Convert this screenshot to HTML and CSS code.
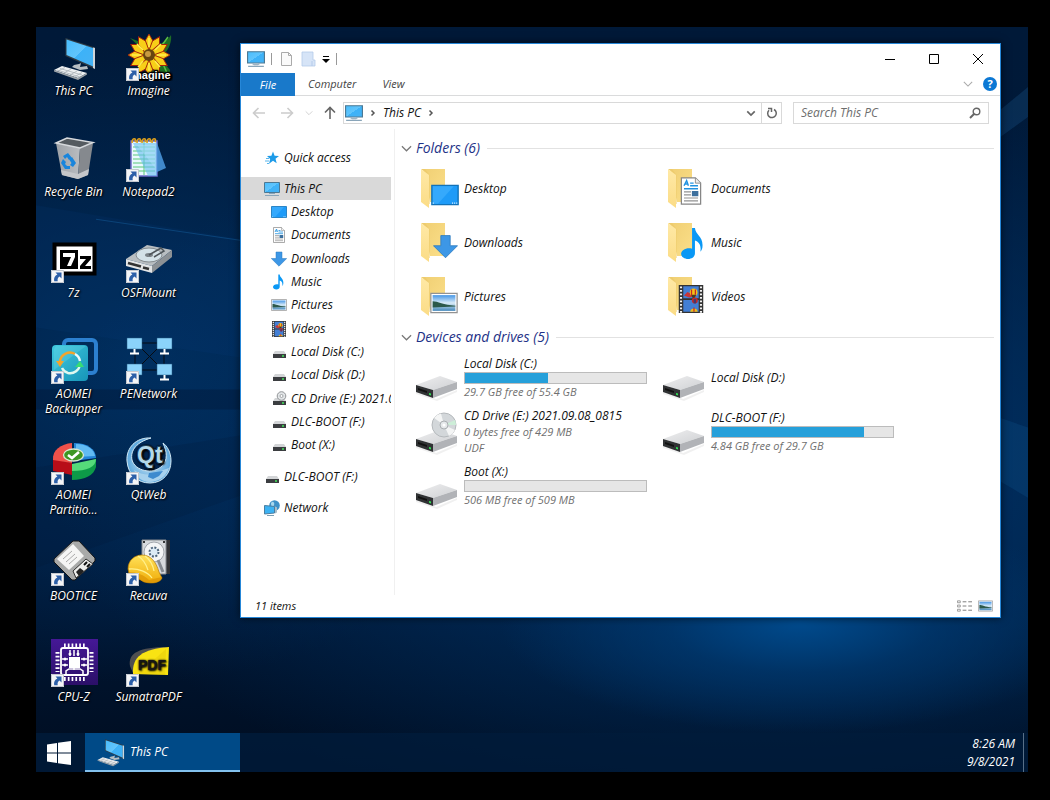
FILE: index.html
```html
<!DOCTYPE html>
<html lang="en">
<head>
  <meta charset="UTF-8">
  <meta name="viewport" content="width=device-width, initial-scale=1.0">
  <title>This PC</title>
  <link rel="stylesheet" href="styles.css">
</head>
<body>
  <!-- shared icons -->
  <svg class="sprite" aria-hidden="true">
    <defs>
      <linearGradient id="blue" x1="0" y1="0" x2="1" y2="1"><stop offset="0" stop-color="#48bdfd"/><stop offset=".5" stop-color="#62c5fc"/><stop offset=".5" stop-color="#3db2f8"/><stop offset="1" stop-color="#45b2f4"/></linearGradient>
      <linearGradient id="sky" x1="0" y1="0" x2="0" y2="1"><stop offset="0" stop-color="#4696e6"/><stop offset=".5" stop-color="#d9ebf7"/><stop offset="1" stop-color="#4387bb"/></linearGradient>
      <linearGradient id="gold" x1="0" y1="0" x2="1" y2="1"><stop offset="0" stop-color="#f0cf73"/><stop offset="1" stop-color="#fbdf8a"/></linearGradient>
      <linearGradient id="flap" x1="0" y1="0" x2="0" y2="1"><stop offset="0" stop-color="#ffe9a6"/><stop offset="1" stop-color="#fbdc86"/></linearGradient>
      <linearGradient id="metal" x1="0" y1="0" x2="1" y2="1"><stop offset="0" stop-color="#eeeeef"/><stop offset="1" stop-color="#cfd1d4"/></linearGradient>
      <linearGradient id="teal" x1="0" y1="0" x2="1" y2="1"><stop offset="0" stop-color="#3fc9df"/><stop offset="1" stop-color="#1795b8"/></linearGradient>
      <radialGradient id="globe"><stop offset="0" stop-color="#d6ecf8"/><stop offset="1" stop-color="#5aa6dc"/></radialGradient>
      <linearGradient id="helmet" x1="0" y1="0" x2="0" y2="1"><stop offset="0" stop-color="#ffe25a"/><stop offset="1" stop-color="#f0ac08"/></linearGradient>
      <linearGradient id="purple" x1="0" y1="0" x2="0" y2="1"><stop offset="0" stop-color="#451896"/><stop offset="1" stop-color="#2b1068"/></linearGradient>
      <linearGradient id="bin" x1="0" y1="0" x2="1" y2="0"><stop offset="0" stop-color="#9da1a6"/><stop offset="1" stop-color="#b9bcc0"/></linearGradient>
    </defs>
    <symbol id="shortcut" viewBox="0 0 13 13">
      <path d="M0 0h13v13H0z" fill="#f4f5f7"/><path d="M.5.5h12v12H.5z" fill="none" stroke="#c4c8cf"/>
      <path d="M4.500 2.500h6v6L8.600 6.600C7 7.500 6.300 9 6.700 11.200H3.200C2.500 8 4 5.700 6.400 4.500z" fill="#2c5fa8"/>
    </symbol>
    <symbol id="pc" viewBox="0 0 16 16">
      <path d="M.5 1.500h15v10H.5z" fill="url(#blue)" stroke="#4c7893"/><path d="M6 12h4v2H6z" fill="#d4dde3"/><path d="M1 14.500h14M5 12.500h6" stroke="#89a5b9"/>
    </symbol>
    <symbol id="pc-big" viewBox="0 0 48 48">
      <path d="M31 30l-1 4 7-1 1 3-8 1-8-3 2-2 5-1z" fill="#b6bdc1"/>
      <path d="M15.500 5l29.500 9.500V36L15.500 23z" fill="#303c45"/><path d="M16.500 6.500L43 15v18.500L16.500 22z" fill="url(#blue)"/><path d="M43 14.500l2 .5v21l-2-1z" fill="#cfd5d9"/>
      <path d="M4 37l8-4 25 7-9 5z" fill="#eef0f1"/><path d="M4 37l24 8 9-5v1.500L28 47 4 38.500z" fill="#9aa1a6"/>
      <path d="M7 37l23 7M10 35.500l22 6.500M15 34.500l-6 3M21 36l-7 4M27 38l-7 4M32 39.500l-7 4" stroke="#aab1b6" stroke-width=".8"/>
    </symbol>
    <symbol id="desktop" viewBox="0 0 16 16">
      <path d="M.5 2.500h15v11H.5z" fill="#1e9bf8" stroke="#1272b8" stroke-width=".8"/><path d="M1 3h12L4 13H1z" fill="#45b3ff" opacity=".6"/><path d="M1 12.700h.6M12 12.700h.6M13.200 12.700h.6M14.400 12.700h.6" stroke="#d9f0ff" stroke-width=".7"/>
    </symbol>
    <symbol id="doc" viewBox="0 0 16 16">
      <path d="M2.500.5h8l3 3v12h-11z" fill="#fff" stroke="#868686" stroke-width=".7"/><path d="M10.500.5v3h3" fill="#eee" stroke="#868686" stroke-width=".5"/>
      <path d="M4 5l1.500-3L6.500 5M4.500 4h1.800M7.500 3.500h2M7.500 5h4.500M4 6.700h8" stroke="#2192e0" stroke-width=".8" fill="none"/><path d="M4 8.500h4M4 10.200h4M4 12h8M4 13.700h8" stroke="#929292" stroke-width=".7"/><path d="M8.500 8h3.700v3H8.500z" fill="#3c6f9d"/>
    </symbol>
    <symbol id="download" viewBox="0 0 16 16"><path d="M5 1h6v6.500h4.700L8 15.200.3 7.500H5z" fill="#3d97e6" stroke="#2a78bd" stroke-width=".5"/></symbol>
    <symbol id="music" viewBox="0 0 16 16"><path d="M7.300.5h1.400c.3 3.500 4.300 4 3.600 9.500-.2 1-.6 1.500-1 2 .5-2.500-.2-4.700-2.600-5.500v6.200c0 1.700-1.500 2.800-3.300 2.800S2 14.500 2 13c0-1.700 2.500-3.200 5.300-2.500z" fill="#0a98f5"/></symbol>
    <symbol id="picture" viewBox="0 0 16 16">
      <path d="M.5 2.500h15v11H.5z" fill="#fff" stroke="#929292" stroke-width=".7"/><path d="M1.500 3.500h13v9h-13z" fill="url(#sky)"/><path d="M1.500 7c3 0 6 2 13 2.600V10l-13 .6z" fill="#2c594b"/>
    </symbol>
    <symbol id="video" viewBox="0 0 16 16">
      <path d="M1 0h14v16H1z" fill="#333"/><path d="M3.600 .7h8.800v6.800H3.600zM3.600 8.500h8.800v6.800H3.600z" fill="#437fd5"/>
      <path d="M4 6l2-2 2 1 1 1.500-2 .7z" fill="#c93538"/><circle cx="9.500" cy="4.200" r="2.200" fill="#f2c319"/><path d="M8 5.500h3l-1 2H9z" fill="#4a3b20"/><circle cx="10.200" cy="8.800" r="1.700" fill="#c32929"/><path d="M9.500 8h1.400v2.500H9.500z" fill="#433a70"/><path d="M7.500 15.300a2.300 2.600 0 0 1 4.400 0z" fill="#efbc16"/><path d="M8.300 2.600v3.200M10.500 2.500v3M9.700 12.800v2.500" stroke="#c62626" stroke-width=".7"/>
      <path d="M2.300.8v15M13.700.8v15" stroke="#f2f2f2" stroke-width="1.200" stroke-dasharray="1.100 .9"/>
    </symbol>
    <symbol id="drive" viewBox="0 0 16 16"><path d="M4 7h9l2 3H2z" fill="#d3d5d7"/><path d="M2 10h13v4H2z" fill="#3b3d40"/><path d="M11 12h2" stroke="#42e65a" stroke-width="1.500"/></symbol>
    <symbol id="cd" viewBox="0 0 16 16"><use href="#drive"/><circle cx="10.500" cy="5" r="4.300" fill="#e2e5e7" stroke="#929598"/><circle cx="10.500" cy="5" r="1.500" fill="#fff" stroke="#929598" stroke-width=".8"/></symbol>
    <symbol id="network" viewBox="0 0 16 16">
      <circle cx="10.500" cy="5.500" r="5.300" fill="#3e91c8"/><path d="M7 3c2-3 4 0 3 2s2 1 3 3c-3 3-6 0-6-5z" fill="#a8d8ee"/>
      <path d="M.5 5.500l10 1v6.500l-10 1z" fill="#3cb2f3" stroke="#4b7ea0"/><path d="M11 6.500l2 1v5l-2 1z" fill="#a9bdc9"/><path d="M3 15.500h7" stroke="#7c9eb3"/>
    </symbol>
    <symbol id="star" viewBox="0 0 16 16"><path d="M9 1.500l1.600 4.300 4.400.2-3.500 2.700 1.200 4.500L9 10.700 5 13.700l1.200-4.600L3 6l4.400-.2z" fill="#1e9be8"/><path d="M2 8.500h3M1 11h4M3 13.500h2" stroke="#56b5ec"/></symbol>
    <symbol id="folder" viewBox="0 0 48 48">
      <path d="M7 4h22v33H14z" fill="url(#gold)"/><path d="M5 4h4l4.500 6v29H13V10z" fill="#edcb6d"/><path d="M5 4l8 6v33l-8-6z" fill="url(#flap)"/>
    </symbol>
    <symbol id="drive-big" viewBox="0 0 48 48">
      <path d="M0 36l20 9 21-9v2L21 47 0 40z" fill="#000" opacity=".06"/>
      <path d="M0 31l24-9 17 6-24 8z" fill="url(#metal)"/><path d="M17 36l24-8v7l-24 9z" fill="#b1b3b7"/><path d="M0 31l17 5v8L0 38z" fill="#303234"/><path d="M2 34l9 3v2l-9-3z" fill="#111"/><path d="M13 39l2 .6v1.800l-2-.6z" fill="#30e154"/>
    </symbol>
    <symbol id="cd-big" viewBox="0 0 48 48">
      <use href="#drive-big"/><circle cx="28" cy="17" r="12" fill="#d3d7da" stroke="#b5b9bc"/><path d="M28 17L18 10a12 12 0 0 1 7-4.500zM28 17l11 5a12 12 0 0 1-6 6z" fill="#f4f5f5"/><path d="M28 17l11-5a12 12 0 0 1 1 5z" fill="#cdeed8"/><circle cx="28" cy="17" r="4" fill="#e5e8ea" stroke="#abafb2"/><circle cx="28" cy="17" r="1.500" fill="#fff"/>
    </symbol>
    <symbol id="chevron-down" viewBox="0 0 12 12"><path d="M1 3.500l5 5 5-5" fill="none" stroke="currentColor" stroke-width="1.300"/></symbol>
    <symbol id="chevron-right" viewBox="0 0 12 12"><path d="M4.500 3.500L7 6 4.500 8.500" fill="none" stroke="currentColor" stroke-width="1.500"/></symbol>
    <symbol id="arrow" viewBox="0 0 14 14"><path d="M13 7H2M6.500 2L1.500 7l5 5" fill="none" stroke="currentColor" stroke-width="1.600"/></symbol>
  </svg>

  <main class="desktop">
    <svg class="beams" viewBox="0 0 992 744" preserveAspectRatio="none" aria-hidden="true">
      <path d="M0 178L204 212V330L0 300z" fill="#06407d" opacity=".14"/>
      <path d="M60 192l144 21" stroke="#1c73b8" opacity=".35"/>
      <path d="M0 362h204v20H0z" fill="#00112b" opacity=".3"/>
      <path d="M0 440l204-32v60L0 540z" fill="#00122e" opacity=".15"/>
      <path d="M700 300L992 90V60z" fill="#2a79b8" opacity=".2"/>
      <path d="M700 300l292 100v70z" fill="#1d76bb" opacity=".15"/>
    </svg>

    <section class="shortcuts">
      <a class="shortcut" href="#"><svg><use href="#pc-big"/></svg><span>This PC</span></a>
      <a class="shortcut" href="#">
        <svg viewBox="0 0 48 48">
          <path d="M5 5l13 5-2 5zM46 2c-3 6-11 8-14 12l8 6c4-4 7-12 6-18zM36 26l9 11v8H20l3-11z" fill="#1d6d25"/><path d="M43 4l-8 11M38 31l4 9" stroke="#5bbf42" stroke-width="1.500"/>
          <g stroke="#a3200b" stroke-width=".9">
            <g id="petals" fill="#f8cf18"><path d="M24 1l4 7-2 12h-4L20 8zM24 43l4-7-2-12h-4l-2 12zM3 22l7-4 12 2v4l-12 2zM45 22l-7-4-12 2v4l12 2z"/></g>
            <use href="#petals" transform="rotate(30 24 22)"/><use href="#petals" transform="rotate(60 24 22)"/>
          </g>
          <path d="M24 14V5M18 17l-6-6M30 17l6-6M16 22H7M32 22h9M18 28l-5 6M30 28l5 6M24 30v8" stroke="#fff04e" stroke-width="1.500"/>
          <circle cx="24" cy="22" r="6" fill="#69450f"/><circle cx="23" cy="21" r="3" fill="#c99a40"/>
          <text class="imagine-text" x="7" y="46">magine</text>
          <use href="#shortcut" x="1" y="35" width="13" height="13"/>
        </svg>
        <span>Imagine</span>
      </a>
      <a class="shortcut" href="#">
        <svg viewBox="0 0 48 48">
          <path d="M6 9l24 5-2 31-16-4z" fill="url(#bin)"/><path d="M30 14l13-5-5 32-10 4z" fill="#85898e"/>
          <path d="M6 9l11-5 26 4.500L30 14z" fill="#555b60" stroke="#d7dadd" stroke-width="1.500"/><path d="M11 36l17 4 11-5-1 6-10 4-16-4z" fill="#c5c7ca"/>
          <path d="M13 22l5-3 4 5-3 2-2-3-2 2zM22 23l4 6-3 4-3-2 1.500-2-2-3zM20 35h-5l-4-6 2-4 3 3-1 2 2 2h3z" fill="#1985dc"/>
        </svg>
        <span>Recycle Bin</span>
      </a>
      <a class="shortcut" href="#">
        <svg viewBox="0 0 48 48">
          <path d="M6 7h26v35H6z" fill="#eaf8ff" stroke="#6c6ac8" stroke-width="1.500"/><path d="M8 13h22M8 17h22M8 21h22M8 25h22M8 29h22M8 33h22M8 37h22M19 8v33" stroke="#5ac878"/>
          <path d="M8 9h24v33h-9z" fill="#64bdf0" opacity=".6"/><path d="M32 9l9 25-9 4z" fill="#4793d8" opacity=".9"/><path d="M12 11h18v23z" fill="#b6e6fc" opacity=".4"/>
          <path d="M7 9c0-6 5-5 3-1M12 9c0-6 5-5 3-1M17 9c0-6 5-5 3-1M22 9c0-6 5-5 3-1M27 9c0-6 5-5 3-1" fill="none" stroke="#d99e1d" stroke-width="1.700"/>
          <use href="#shortcut" x="1" y="35" width="13" height="13"/>
        </svg>
        <span>Notepad2</span>
      </a>
      <a class="shortcut" href="#">
        <svg viewBox="0 0 48 48">
          <path d="M4.500 9.500h40v29h-40z" fill="#fff" stroke="#000" stroke-width="4"/><path d="M10 15h18v19H10z"/>
          <path d="M13 18h12v4l-4 9h-4l4-9h-8z" fill="#fff"/><path d="M30 21h11v3l-6 7h6v3H30v-3l6-7h-6z"/>
          <use href="#shortcut" x="1" y="35" width="13" height="13"/>
        </svg>
        <span>7z</span>
      </a>
      <a class="shortcut" href="#">
        <svg viewBox="0 0 48 48">
          <path d="M1 24l21-14 25 5-20 16z" fill="#b9bec1"/><path d="M1 24l26 7v7L1 31z" fill="#e3e5e6"/><path d="M27 31l20-16v7L27 38z" fill="#8c9195"/>
          <ellipse cx="24" cy="20" rx="13" ry="7" fill="#d4e2e8" stroke="#858b8f"/><ellipse cx="24" cy="20" rx="4" ry="2" fill="#7b8388"/><path d="M24 20l12-7 3 3-10 6" fill="none" stroke="#4e555a" stroke-width="1.500"/><path d="M3 28l13 3.500M18 32.500l6 1.500" stroke="#333" stroke-width="2.500"/>
          <use href="#shortcut" x="1" y="35" width="13" height="13"/>
        </svg>
        <span>OSFMount</span>
      </a>
      <a class="shortcut" href="#">
        <svg viewBox="0 0 48 48">
          <rect x="14" y="4" width="32" height="33" rx="4" fill="none" stroke="#2c80d0" stroke-width="4"/><rect x="2" y="9" width="36" height="36" rx="4" fill="url(#teal)"/><path d="M6 10h30L4 34V13z" fill="#7fe0ef" opacity=".25"/>
          <path d="M10 25a10 10 0 0 1 15-7" fill="none" stroke="#f3a42c" stroke-width="2.500"/><path d="M25 18a10 10 0 0 1 5 7" fill="none" stroke="#eefafa" stroke-width="2.500"/><path d="M30 28a10 10 0 0 1-12 9q-4-1-6-5" fill="none" stroke="#dff8ef" stroke-width="2.500"/><path d="M6 25h8l-4 6z" fill="#f3a42c"/><path d="M25 31l5-6 4 6z" fill="#38dc74"/>
          <use href="#shortcut" x="1" y="35" width="13" height="13"/>
        </svg>
        <span>AOMEI Backupper</span>
      </a>
      <a class="shortcut" href="#">
        <svg viewBox="0 0 48 48">
          <path d="M17 7h15M10 18v10M39 18v10M17 13l15 15M32 13L17 28M17 34h15" stroke="#070b12"/>
          <g id="screens"><path d="M2 2h15v11H2zM32 2h15v11H32z" fill="#8bd3fb" stroke="#245b82" stroke-width=".5"/><path d="M9.500 13v4M5 17.500h9M39.500 13v4M35 17.500h9" stroke="#fff" stroke-width="2"/></g>
          <use href="#screens" y="26"/>
          <use href="#shortcut" x="1" y="35" width="13" height="13"/>
        </svg>
        <span>PENetwork</span>
      </a>
      <a class="shortcut" href="#">
        <svg viewBox="0 0 48 48">
          <path d="M3 22l19 4v12L3 34z" fill="#b80d18"/><path d="M22 26L3 23C2 13 11 7 22 6z" fill="#ef514a"/>
          <path d="M24 21V6c13 0 22 6 22 15l-22 3z" fill="#2386da"/><path d="M26 20V7c12 0 18 6 19 12z" fill="#62bbf3"/>
          <path d="M22 29l24-7v8c-2 8-11 13-24 13z" fill="#0d9a48"/><path d="M22 27l24-5c0 8-9 12-24 12z" fill="#55da7a"/>
          <ellipse cx="23.500" cy="18" rx="10" ry="6" fill="#3d9722" stroke="#d9e8d2" stroke-width="1.300"/><path d="M18 18l4 3 7-6" fill="none" stroke="#fff" stroke-width="2.600"/>
          <use href="#shortcut" x="1" y="35" width="13" height="13"/>
        </svg>
        <span>AOMEI Partitio...</span>
      </a>
      <a class="shortcut" href="#">
        <svg viewBox="0 0 48 48">
          <path d="M26 1C11 0 1 11 2 24c1 14 11 22 23 22 13 0 21-10 21-22 0-9-4-15-8-18 4 9 5 17-1 23-9 9-27 5-30-6C5 13 12 5 26 1z" fill="url(#globe)" stroke="#d3e9f5"/>
          <path d="M9 33c9 6 20 6 29 0l6-2c-3 9-11 14-20 14-7 0-12-5-15-12z" fill="#a7d1ed"/><path d="M24 36l14-2-4 5-6 3-5-2z" fill="#3d8ace"/>
          <text class="qt-text" x="12" y="26">Qt</text>
          <use href="#shortcut" x="1" y="35" width="13" height="13"/>
        </svg>
        <span>QtWeb</span>
      </a>
      <a class="shortcut" href="#">
        <svg viewBox="0 0 48 48">
          <path d="M4 21L23 3h6l16 17v3L25 42h-3L4 24z" fill="#a9aaa9" stroke="#151515"/><path d="M7 21L23 6l11 12-15 14z" fill="#f5f5f4"/><path d="M13 21l9-8M16 24l9-8M19 26l8-7" stroke="#aaa"/>
          <path d="M23 33l13-12 7 5-17 14z" fill="#ededeb" stroke="#303030"/><path d="M26 34l4-4 4 3-5 5z" fill="#222"/><path d="M34 27l3-3M37 29l3-3" stroke="#111" stroke-width="2"/>
          <use href="#shortcut" x="1" y="35" width="13" height="13"/>
        </svg>
        <span>BOOTICE</span>
      </a>
      <a class="shortcut" href="#">
        <svg viewBox="0 0 48 48">
          <path d="M39 2h6v34h-6z" fill="#303236"/><path d="M17 2h24v34H17z" fill="#d7dadd" stroke="#85898e"/><circle cx="29" cy="14" r="10" fill="#f4f5f6" stroke="#a2a6ac"/><circle cx="29" cy="14" r="4.500" fill="#dceaf5" stroke="#4c637a" stroke-width="2" stroke-dasharray="2 1.500"/><path d="M38 34l-5-12" stroke="#858a91" stroke-width="3"/><circle cx="19" cy="4" r="1"/><circle cx="39" cy="4" r="1"/>
          <path d="M3 31c0-9 7-14 14-14 9 0 14 7 17 17l3 6c-2 5-10 6-18 4L4 35z" fill="url(#helmet)" stroke="#b97b00" stroke-width=".7"/><path d="M4 31c9-1 19 3 23 9M13 18c5 3 8 8 10 14M20 18c4 3 8 9 9 15" fill="none" stroke="#fff08b" stroke-width="1.300"/><path d="M3 34c9 0 16 3 21 8l13-3c-2 7-13 7-20 4z" fill="#dc9606" opacity=".75"/>
          <use href="#shortcut" x="1" y="35" width="13" height="13"/>
        </svg>
        <span>Recuva</span>
      </a>
      <a class="shortcut" href="#">
        <svg viewBox="0 0 48 48">
          <path d="M1 0h47v46H1z" fill="url(#purple)"/>
          <g fill="none" stroke="#fff"><rect x="11" y="9" width="27" height="27" rx="2" stroke-width="1.800"/><path d="M14 6.500h21M14 40h21M7.500 13v20M41.500 13v20" stroke-width="4" stroke-dasharray="1.700 2.100"/><path d="M20 17v-6M24 17v-6M28 17v-6M18 20h-6M18 26h-6M31 20h6M31 26h6M16 36v-4l3-2h11l3 2v4M24 28v3" stroke-width="1.500"/></g>
          <path d="M19 18h11v11H19z" fill="#fff"/><g fill="#fff"><circle cx="20" cy="15" r="1.500"/><circle cx="28" cy="15" r="1.500"/><circle cx="15" cy="20" r="1.500"/><circle cx="15" cy="26" r="1.500"/><circle cx="34" cy="20" r="1.500"/><circle cx="34" cy="26" r="1.500"/></g>
          <use href="#shortcut" x="1" y="35" width="13" height="13"/>
        </svg>
        <span>CPU-Z</span>
      </a>
      <a class="shortcut" href="#">
        <svg viewBox="0 0 48 48">
          <path d="M5 27C3 14 14 8 43 8L20 13 8 34z" fill="#4e4f50"/><path d="M8 35C7 18 17 10 44 8l-1 28z" fill="#f9e313"/><path d="M13 35L41 10l-1 26z" fill="#d5b300" opacity=".25"/>
          <text class="pdf-text" x="13" y="31">PDF</text>
          <use href="#shortcut" x="1" y="35" width="13" height="13"/>
        </svg>
        <span>SumatraPDF</span>
      </a>
    </section>

    <section class="window" aria-label="This PC">
      <header class="titlebar">
        <svg class="icon-18"><use href="#pc"/></svg>
        <i class="sep"></i>
        <button class="quick" aria-label="Properties"><svg class="icon-16" viewBox="0 0 16 16"><path d="M3.500 1.500h7l3 3v10h-10z" fill="#fafafa" stroke="#aaa"/><path d="M10.500 1.500v3h3" fill="none" stroke="#aaa"/></svg></button>
        <button class="quick" aria-label="New folder"><svg class="icon-16" viewBox="0 0 16 16"><path d="M2 1h11v8h2v6H2z" fill="#d6e4f7" stroke="#b4caea" stroke-width=".8"/><path d="M12 15v-5" stroke="#b4caea"/></svg></button>
        <button class="quick small" aria-label="Customize toolbar"><svg viewBox="0 0 8 8"><path d="M1 1h6v1H1zM0 4h8L4 8z"/></svg></button>
        <i class="sep"></i>
        <div class="controls">
          <button aria-label="Minimize"><svg viewBox="0 0 12 12"><path d="M1 6.500h10"/></svg></button>
          <button aria-label="Maximize"><svg viewBox="0 0 12 12"><path d="M1.500 1.500h9v9h-9z"/></svg></button>
          <button aria-label="Close"><svg viewBox="0 0 12 12"><path d="M1 1l10 10M11 1L1 11"/></svg></button>
        </div>
      </header>

      <nav class="ribbon">
        <button class="file">File</button>
        <button>Computer</button>
        <button>View</button>
        <div class="ribbon-end">
          <button aria-label="Expand ribbon"><svg class="icon-10"><use href="#chevron-down"/></svg></button>
          <button class="help" aria-label="Help">?</button>
        </div>
      </nav>

      <div class="address-row">
        <div class="history">
          <button class="off" aria-label="Back"><svg><use href="#arrow"/></svg></button>
          <button class="off forward" aria-label="Forward"><svg><use href="#arrow"/></svg></button>
          <button class="off recent" aria-label="Recent locations"><svg><use href="#chevron-down"/></svg></button>
          <button class="up" aria-label="Up"><svg><use href="#arrow"/></svg></button>
        </div>
        <div class="address">
          <svg class="icon-18"><use href="#pc"/></svg>
          <svg class="crumb"><use href="#chevron-right"/></svg>
          <button>This PC</button>
          <svg class="crumb"><use href="#chevron-right"/></svg>
          <button class="drop" aria-label="Previous locations"><svg class="icon-10" viewBox="0 0 12 12"><path d="M1.500 4L6 8.500 10.500 4" fill="none" stroke="#666" stroke-width="2"/></svg></button>
          <button class="refresh" aria-label="Refresh"><svg viewBox="0 0 12 12"><path d="M8 2.500A4.300 4.300 0 1 1 3 3.200M2 1.500h3.500V5" fill="none" stroke="#666" stroke-width="1.500"/></svg></button>
        </div>
        <label class="search">
          <input type="text" placeholder="Search This PC" aria-label="Search This PC">
          <svg viewBox="0 0 12 12"><circle cx="7.500" cy="4.500" r="3.300" fill="none" stroke="#666" stroke-width="1.400"/><path d="M5 7L1 11" stroke="#666" stroke-width="2"/></svg>
        </label>
      </div>

      <div class="body">
        <nav class="tree">
          <ul>
            <li><a href="#"><svg><use href="#star"/></svg>Quick access</a></li>
          </ul>
          <ul class="pc-tree">
            <li class="selected"><a href="#"><svg><use href="#pc"/></svg>This PC</a></li>
            <li class="child"><a href="#"><svg><use href="#desktop"/></svg>Desktop</a></li>
            <li class="child"><a href="#"><svg><use href="#doc"/></svg>Documents</a></li>
            <li class="child"><a href="#"><svg><use href="#download"/></svg>Downloads</a></li>
            <li class="child"><a href="#"><svg><use href="#music"/></svg>Music</a></li>
            <li class="child"><a href="#"><svg><use href="#picture"/></svg>Pictures</a></li>
            <li class="child"><a href="#"><svg><use href="#video"/></svg>Videos</a></li>
            <li class="child"><a href="#"><svg><use href="#drive"/></svg>Local Disk (C:)</a></li>
            <li class="child"><a href="#"><svg><use href="#drive"/></svg>Local Disk (D:)</a></li>
            <li class="child"><a href="#"><svg><use href="#cd"/></svg>CD Drive (E:) 2021.09.08_0815</a></li>
            <li class="child"><a href="#"><svg><use href="#drive"/></svg>DLC-BOOT (F:)</a></li>
            <li class="child"><a href="#"><svg><use href="#drive"/></svg>Boot (X:)</a></li>
          </ul>
          <ul>
            <li><a href="#"><svg><use href="#drive"/></svg>DLC-BOOT (F:)</a></li>
          </ul>
          <ul>
            <li><a href="#"><svg><use href="#network"/></svg>Network</a></li>
          </ul>
        </nav>

        <div class="content">
          <h2><svg><use href="#chevron-down"/></svg>Folders (6)</h2>
          <div class="tiles">
            <a class="tile" href="#"><svg viewBox="0 0 48 48"><use href="#folder"/><use href="#desktop" x="15" y="16" width="28" height="28"/></svg><span>Desktop</span></a>
            <a class="tile" href="#"><svg viewBox="0 0 48 48"><use href="#folder"/><use href="#doc" x="14" y="12" width="28" height="28"/></svg><span>Documents</span></a>
            <a class="tile" href="#"><svg viewBox="0 0 48 48"><use href="#folder"/><use href="#download" x="17" y="15" width="25" height="25"/></svg><span>Downloads</span></a>
            <a class="tile" href="#"><svg viewBox="0 0 48 48"><use href="#folder"/><use href="#music" x="14" y="8" width="33" height="33"/></svg><span>Music</span></a>
            <a class="tile" href="#"><svg viewBox="0 0 48 48"><use href="#folder"/><use href="#picture" x="14" y="16" width="28" height="28"/></svg><span>Pictures</span></a>
            <a class="tile" href="#"><svg viewBox="0 0 48 48"><use href="#folder"/><use href="#video" x="14" y="12" width="28" height="28"/></svg><span>Videos</span></a>
          </div>
          <h2><svg><use href="#chevron-down"/></svg>Devices and drives (5)</h2>
          <div class="tiles">
            <a class="tile" href="#"><svg><use href="#drive-big"/></svg><span>Local Disk (C:)<i class="bar"><b style="width: 46%"></b></i><small>29.7 GB free of 55.4 GB</small></span></a>
            <a class="tile" href="#"><svg><use href="#drive-big"/></svg><span>Local Disk (D:)</span></a>
            <a class="tile" href="#"><svg><use href="#cd-big"/></svg><span>CD Drive (E:) 2021.09.08_0815<small>0 bytes free of 429 MB</small><small>UDF</small></span></a>
            <a class="tile" href="#"><svg><use href="#drive-big"/></svg><span>DLC-BOOT (F:)<i class="bar"><b style="width: 84%"></b></i><small>4.84 GB free of 29.7 GB</small></span></a>
            <a class="tile" href="#"><svg><use href="#drive-big"/></svg><span>Boot (X:)<i class="bar"><b style="width: 0%"></b></i><small>506 MB free of 509 MB</small></span></a>
          </div>
        </div>
      </div>

      <footer class="status">
        <span>11 items</span>
        <div class="views">
          <button aria-label="Details view"><svg viewBox="0 0 16 14"><path d="M.5 1.500h3v2h-3zM.5 6h3v2h-3zM.5 10.500h3v2h-3z" fill="#fff" stroke="#999"/><path d="M6 2.500h4M12 2.500h4M6 7h4M12 7h4M6 11.500h4M12 11.500h4" stroke="#777"/></svg></button>
          <button aria-label="Large icons view"><svg viewBox="0 1 16 14"><use href="#picture" width="16" height="16"/></svg></button>
        </div>
      </footer>
    </section>

    <footer class="taskbar">
      <button class="start" aria-label="Start"><svg viewBox="0 0 24 24"><path d="M0 3.500L10 2v9.500H0zM11 1.800L24 0v11.500H11zM0 12.500h10V22L0 20.500zM11 12.500h13V24l-13-1.800z" fill="#fff"/></svg></button>
      <button class="task"><svg><use href="#pc-big"/></svg>This PC</button>
      <div class="clock"><time>8:26 AM</time><time>9/8/2021</time></div>
      <button class="show-desktop" aria-label="Show desktop"></button>
    </footer>
  </main>
</body>
</html>
```
FILE: styles.css
```css
* { box-sizing: border-box; }
body { margin: 0; padding: 27px 22px 28px 36px; background: #000; font: italic 12px/16px "Open Sans", "Noto Sans", sans-serif; color: #111; }
button { padding: 0; border: 0; background: none; font: inherit; color: inherit; }
a { color: inherit; text-decoration: none; }
ul { margin: 0; padding: 0; list-style: none; }
svg { display: block; flex: none; }
.sprite { position: absolute; width: 0; height: 0; }
.icon-10 { width: 10px; height: 10px; }
.icon-16 { width: 16px; height: 16px; }
.icon-18 { width: 18px; height: 18px; }

.desktop {
  position: relative;
  display: flex;
  flex-direction: column;
  min-height: calc(100vh - 55px);
  background:
    radial-gradient(ellipse 300px 110px at 77% 80%, #004a8c 0%, rgba(0, 61, 119, 0.6) 45%, transparent 100%),
    radial-gradient(ellipse 700px 380px at 72% 58%, #00366d 0%, transparent 100%),
    radial-gradient(ellipse 420px 320px at 10% 45%, #002e5e 0%, transparent 100%),
    linear-gradient(#001938, #001a3b 70%, #000d20);
}
.beams { position: absolute; inset: 0; width: 100%; height: 100%; }

.shortcuts { position: relative; flex: 1; display: grid; grid-template-columns: 75px 75px; grid-template-rows: repeat(6, 101px) 90px; padding-top: 6px; align-content: start; }
.shortcut { display: flex; flex-direction: column; align-items: center; color: #fff; text-align: center; line-height: 15px; text-shadow: 1px 1px 2px #000, 0 0 2px #000; }
.shortcut svg { width: 48px; height: 48px; margin-bottom: 2px; }
.imagine-text { font: bold 11px "Liberation Sans", sans-serif; fill: #fff; stroke: #000; stroke-width: 2px; paint-order: stroke; }
.qt-text { font: bold 23px "Liberation Sans", sans-serif; fill: #b3d8ea; stroke: #315d7b; stroke-width: 2px; paint-order: stroke; }
.pdf-text { font: bold 14px "Liberation Sans", sans-serif; fill: #161616; }

.window { position: absolute; top: 16px; right: 27px; bottom: 154px; left: 204px; display: flex; flex-direction: column; background: #fff; border: 1px solid #2687d8; box-shadow: 0 0 8px rgba(0, 0, 0, 0.6); }
.titlebar { display: flex; align-items: center; gap: 6px; height: 29px; padding-left: 6px; }
.sep { width: 1px; height: 12px; background: #999; }
.quick.small svg { width: 8px; height: 8px; }
.controls { display: flex; margin-left: auto; }
.controls button { display: grid; place-items: center; width: 44px; height: 28px; }
.controls svg { width: 12px; height: 12px; fill: none; stroke: #000; stroke-width: 1px; }
.ribbon { display: flex; height: 23px; border-bottom: 1px solid #dadbdc; color: #444; font-size: 11px; }
.ribbon > button { padding: 0 13px; }
.ribbon .file { width: 54px; margin-bottom: -1px; background: #1979ca; color: #fff; }
.ribbon-end { display: flex; align-items: center; gap: 10px; margin-left: auto; padding-right: 3px; color: #aaa; }
.help { width: 14px; height: 14px; border-radius: 50%; background: #0c78d4; color: #fff; font: bold 11px/14px "Open Sans", sans-serif; }

.address-row { display: flex; align-items: center; height: 33px; padding-right: 11px; }
.history { display: flex; align-items: center; gap: 14px; width: 102px; padding-left: 11px; color: #666; }
.history svg { width: 14px; height: 14px; }
.history .off { color: #ccc; }
.history .forward svg { transform: rotate(180deg); }
.history .recent { margin-right: -4px; margin-left: -3px; }
.history .recent svg { width: 8px; height: 8px; }
.history .up svg { transform: rotate(90deg); }
.address { display: flex; flex: 1; align-items: center; height: 22px; border: 1px solid #d9d9d9; padding-left: 1px; }
.address .crumb { width: 12px; height: 12px; margin: 0 4px; color: #555; }
.address .drop { margin-left: auto; padding: 0 5px; }
.address .refresh { display: grid; place-items: center; width: 20px; height: 20px; border-left: 1px solid #d9d9d9; }
.refresh svg, .search svg { width: 12px; height: 12px; }
.search { display: flex; align-items: center; width: 196px; height: 22px; margin-left: 11px; padding: 0 7px; border: 1px solid #d9d9d9; }
.search input { flex: 1; min-width: 0; border: 0; padding: 0; outline: 0; font: inherit; }
.search input::placeholder { color: #6d6d6d; opacity: 1; }

.body { display: flex; flex: 1; min-height: 0; }
.tree { display: flex; flex: none; flex-direction: column; gap: 8px; width: 154px; padding: 17px 3px 0 0; border-right: 1px solid #f0f0f0; }
.tree li { display: flex; min-width: 0; min-height: 23px; }
.tree a { display: flex; flex: 1; align-items: center; gap: 4px; min-width: 0; overflow: hidden; padding-left: 23px; white-space: nowrap; }
.tree .child a { padding-left: 30px; }
.tree svg { width: 16px; height: 16px; }
.tree .selected { background: #d9d9d9; }
.pc-tree { display: grid; grid-template-columns: minmax(0, 1fr); grid-auto-rows: 1fr; height: 280px; }
.content { flex: 1; padding: 6px 6px 0; }
.content h2 { display: flex; align-items: center; gap: 4px; height: 26px; margin: 0; color: #1e3287; font-size: 14px; font-weight: normal; }
.content h2 svg { width: 11px; height: 11px; color: #777; }
.content h2::after { content: ""; flex: 1; height: 1px; margin-left: 3px; background: #e2e2e2; }
.tiles { display: grid; grid-template-columns: 247px 247px; grid-auto-rows: 54px; padding: 1px 0 0 15px; }
.tile { display: flex; align-items: center; }
.tile svg { width: 48px; height: 48px; }
.tile small { display: block; color: #707070; font-size: 11px; }
.bar { display: block; width: 183px; height: 12px; border: 1px solid #bcbcbc; background: #e6e6e6; }
.bar b { display: block; height: 100%; background: #26a0da; }

.status { display: flex; align-items: center; justify-content: space-between; height: 22px; padding: 0 7px 0 14px; font-size: 11px; }
.views { display: flex; gap: 6px; }
.views svg { width: 15px; height: 14px; }

.taskbar { position: relative; display: flex; align-items: stretch; height: 39px; background: rgba(0, 28, 59, 0.8); color: #fff; }
.start { display: grid; place-items: center; width: 49px; padding-right: 3px; }
.start svg { width: 24px; height: 24px; }
.task { display: flex; align-items: center; gap: 4px; width: 155px; padding-left: 10px; border-bottom: 2px solid #83c1ee; background: #004a87; }
.task svg { width: 31px; height: 31px; }
.clock { display: flex; flex-direction: column; justify-content: center; margin-left: auto; padding-right: 8px; text-align: right; line-height: 18px; }
.show-desktop { width: 5px; border-left: 1px solid #587088; }
```
